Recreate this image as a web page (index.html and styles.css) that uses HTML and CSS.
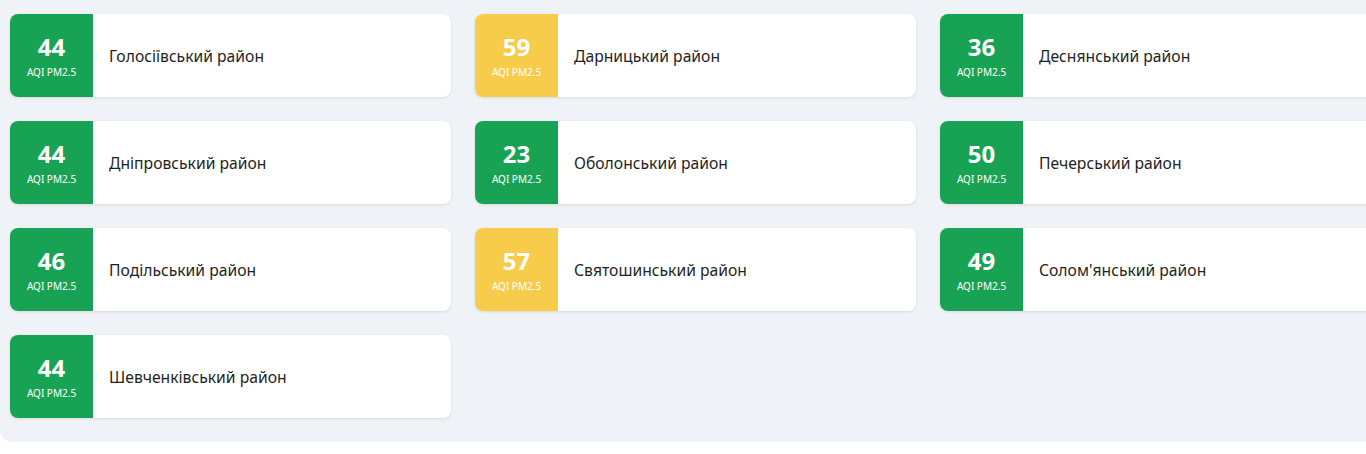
FILE: index.html
```html
<!DOCTYPE html>
<html lang="uk">
<head>
<meta charset="utf-8">
<title>AQI PM2.5</title>
<link rel="stylesheet" href="styles.css">
</head>
<body>
<main class="panel">
  <div class="grid">
    <div class="card"><div class="badge good"><span class="num">44</span><span class="lbl">AQI PM2.5</span></div><div class="name">Голосіївський район</div></div>
    <div class="card"><div class="badge moderate"><span class="num">59</span><span class="lbl">AQI PM2.5</span></div><div class="name">Дарницький район</div></div>
    <div class="card"><div class="badge good"><span class="num">36</span><span class="lbl">AQI PM2.5</span></div><div class="name">Деснянський район</div></div>
    <div class="card"><div class="badge good"><span class="num">44</span><span class="lbl">AQI PM2.5</span></div><div class="name">Дніпровський район</div></div>
    <div class="card"><div class="badge good"><span class="num">23</span><span class="lbl">AQI PM2.5</span></div><div class="name">Оболонський район</div></div>
    <div class="card"><div class="badge good"><span class="num">50</span><span class="lbl">AQI PM2.5</span></div><div class="name">Печерський район</div></div>
    <div class="card"><div class="badge good"><span class="num">46</span><span class="lbl">AQI PM2.5</span></div><div class="name">Подільський район</div></div>
    <div class="card"><div class="badge moderate"><span class="num">57</span><span class="lbl">AQI PM2.5</span></div><div class="name">Святошинський район</div></div>
    <div class="card"><div class="badge good"><span class="num">49</span><span class="lbl">AQI PM2.5</span></div><div class="name">Солом'янський район</div></div>
    <div class="card"><div class="badge good"><span class="num">44</span><span class="lbl">AQI PM2.5</span></div><div class="name">Шевченківський район</div></div>
  </div>
</main>
</body>
</html>
```
FILE: styles.css
```css
html, body {
  margin: 0;
  padding: 0;
  background: #ffffff;
  overflow: hidden;
}
body {
  font-family: "Noto Sans", "Open Sans", sans-serif;
  color: #1f1f1f;
}
.panel {
  width: 1391px;
  box-sizing: border-box;
  background: #eff2f7;
  padding: 14px 10px 24px 10px;
  border-radius: 0 0 12px 12px;
}
.grid {
  display: grid;
  grid-template-columns: repeat(3, 441px);
  column-gap: 24px;
  row-gap: 24px;
}
.card {
  display: flex;
  height: 83px;
  background: #ffffff;
  border-radius: 8px;
  overflow: hidden;
  box-shadow: 0 1px 3px rgba(0, 0, 0, 0.10);
}
.badge {
  width: 83px;
  flex: none;
  display: flex;
  flex-direction: column;
  align-items: center;
  justify-content: flex-start;
  box-sizing: border-box;
  padding-top: 19px;
  color: #ffffff;
}
.badge.good { background: #18a354; }
.badge.moderate { background: #f8cc4b; }
.num {
  font-size: 24px;
  font-weight: 700;
  line-height: 28px;
}
.lbl {
  font-size: 10px;
  line-height: 14px;
  margin-top: 4px;
}
.name {
  display: flex;
  align-items: center;
  padding-left: 16px;
  font-size: 15.7px;
}
```
